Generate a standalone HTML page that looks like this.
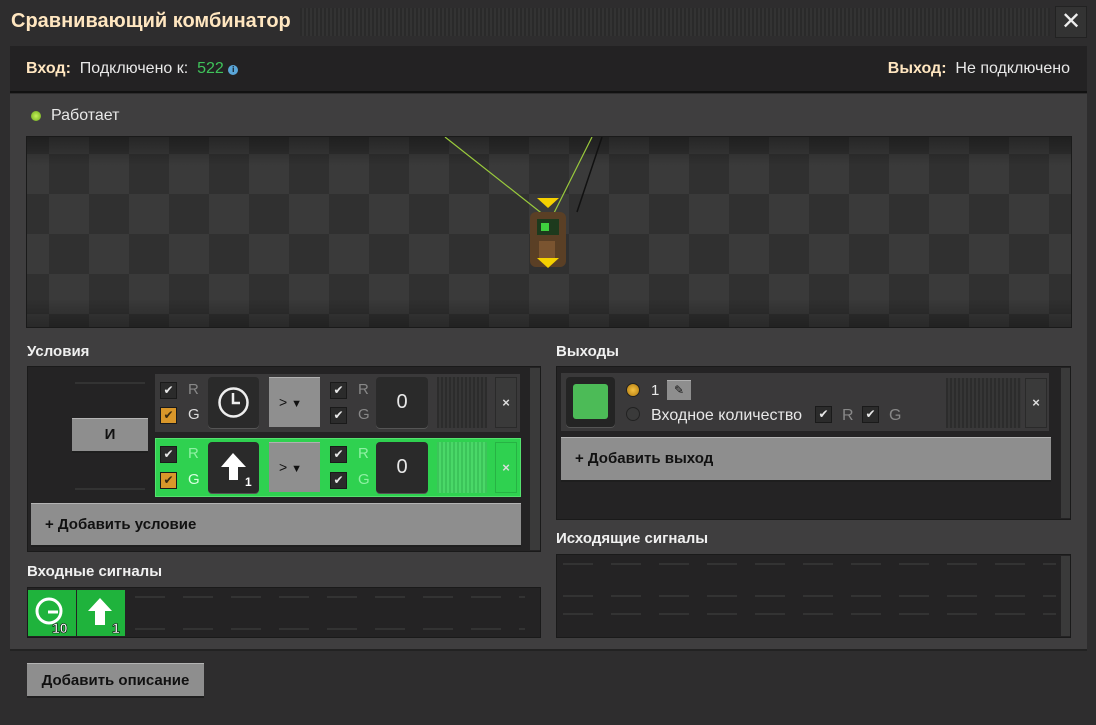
<!DOCTYPE html>
<html><head><meta charset="utf-8"><style>
*{margin:0;padding:0;box-sizing:border-box}
body{width:1096px;height:725px;background:#2e2d2e;font-family:"Liberation Sans","DejaVu Sans",sans-serif;position:relative;overflow:hidden;color:#e8e8e8}
.a{position:absolute}
.t{font-size:15px;white-space:nowrap}
.b{font-weight:bold}
.chk{position:absolute;width:17px;height:17px;background:#2b2b2b;border:1px solid #1a1a1a;color:#e8e8e8;font-size:12px;line-height:15px;text-align:center}
.chk.o{background:#d9972a;color:#3a2a10}
.slot{position:absolute;background:#2a2a2a;border-radius:4px;box-shadow:0 1px 0 #555}
.dd{position:absolute;background:#8f8f8f;border-top:1px solid #b0b0b0;color:#111;font-size:14px}
.stripe{position:absolute;background:repeating-linear-gradient(90deg,#2c2c2c 0 2px,#363636 2px 4px)}
.x{position:absolute;background:#3a3a3a;border:1px solid #2a2a2a;color:#ddd;font-size:13px;text-align:center;font-weight:bold}
.btn{position:absolute;background:#8e8e8e;border-top:1px solid #b4b4b4;border-bottom:2px solid #1e1e1e;color:#111;font-weight:bold;font-size:15px}
.lbl{position:absolute;font-weight:bold;font-size:15px;color:#f0f0f0}
.dash{position:absolute;left:6px;right:14px;height:2px;background:repeating-linear-gradient(90deg,#333 0 30px,transparent 30px 48px)}
</style></head><body>
<!-- title -->
<div class="a b" style="left:11px;top:10px;font-size:20px;color:#ffe6c0">Сравнивающий комбинатор</div>
<div class="a" style="left:300px;top:8px;width:750px;height:28px;background:repeating-linear-gradient(90deg,#2a2a2a 0 2px,#333 2px 4px)"></div>
<div class="a" style="left:1055px;top:6px;width:32px;height:32px;background:#333;border:1px solid #222;color:#eee;font-size:24px;font-weight:bold;text-align:center;line-height:30px">✕</div>
<!-- header -->
<div class="a" style="left:10px;top:46px;width:1077px;height:47px;background:#232223;border-bottom:2px solid #111"></div>
<div class="a t" style="left:26px;top:60px;font-size:16px"><span class="b" style="color:#ffe6c0">Вход:</span>&nbsp; Подключено к:&nbsp; <span style="color:#3fc35a">522</span> <span style="display:inline-block;width:10px;height:10px;border-radius:50%;background:#5aa6d8;color:#111;font-size:8px;line-height:10px;text-align:center;vertical-align:1px;font-weight:bold">i</span></div>
<div class="a t" style="right:26px;top:60px;font-size:16px"><span class="b" style="color:#ffe6c0">Выход:</span>&nbsp; Не подключено</div>
<!-- content -->
<div class="a" style="left:10px;top:94px;width:1077px;height:555px;background:#3f3e3f"></div>
<div class="a" style="left:31px;top:111px;width:10px;height:10px;border-radius:50%;background:radial-gradient(#c6f05a,#6aa81a)"></div>
<div class="a t" style="left:51px;top:107px;font-size:16px">Работает</div>
<!-- preview -->
<div class="a" style="left:26px;top:136px;width:1046px;height:192px;border:1px solid #1a1a1a;overflow:hidden;background-color:#343434;background-image:conic-gradient(#3a3a3a 25%,#303030 0 50%,#3a3a3a 0 75%,#303030 0);background-size:80px 80px;background-position:-18px -23px">
<div class="a" style="left:0;top:0;width:100%;height:100%;background:linear-gradient(180deg,rgba(0,0,0,.35),rgba(0,0,0,0) 15%,rgba(0,0,0,0) 85%,rgba(0,0,0,.3))"></div>
<svg class="a" style="left:0;top:0" width="1046" height="192"><line x1="418" y1="0" x2="522" y2="82" stroke="#9acb3c" stroke-width="1.2"/><line x1="565" y1="0" x2="525" y2="80" stroke="#9acb3c" stroke-width="1.2"/><line x1="575" y1="0" x2="550" y2="75" stroke="#111" stroke-width="1.5"/>
<polygon points="510,61 532,61 521,71" fill="#f5d000"/>
<rect x="503" y="75" width="36" height="55" rx="6" fill="#5a3f25"/><rect x="510" y="82" width="22" height="16" fill="#1d3a1d"/><rect x="514" y="86" width="8" height="8" fill="#3fd03f"/><rect x="512" y="104" width="16" height="18" fill="#7a5430"/>
<polygon points="510,121 532,121 521,131" fill="#f5d000"/></svg>
</div>
<!-- conditions -->
<div class="lbl" style="left:27px;top:343px">Условия</div>
<div class="a" style="left:27px;top:366px;width:514px;height:186px;background:#242324;border:1px solid #1a1a1a"></div>
<div class="a" style="left:530px;top:368px;width:10px;height:182px;background:#3a3a3a"></div>
<div class="a" style="left:75px;top:382px;width:70px;height:2px;background:#333"></div>
<div class="a" style="left:75px;top:488px;width:70px;height:2px;background:#333"></div>
<div class="btn" style="left:72px;top:418px;width:76px;height:35px;text-align:center;line-height:32px">И</div>
<!-- row1 -->
<div class="a" style="left:155px;top:374px;width:365px;height:58px;background:#3a393a"></div>
<div class="chk" style="left:160px;top:382px">✔</div><div class="a t" style="left:188px;top:381px;color:#888">R</div>
<div class="chk o" style="left:160px;top:407px">✔</div><div class="a t" style="left:188px;top:406px;color:#ddd">G</div>
<div class="slot" style="left:208px;top:377px;width:51px;height:51px"><svg width="51" height="51"><circle cx="25.5" cy="25.5" r="14" fill="none" stroke="#eee" stroke-width="2.5"/><path d="M25 16v10h7" fill="none" stroke="#eee" stroke-width="2.5"/></svg></div>
<div class="dd" style="left:269px;top:377px;width:51px;height:50px;line-height:48px;padding-left:10px">&gt; <span style="font-size:11px">▼</span></div>
<div class="chk" style="left:330px;top:382px">✔</div><div class="a t" style="left:358px;top:381px;color:#888">R</div>
<div class="chk" style="left:330px;top:407px">✔</div><div class="a t" style="left:358px;top:406px;color:#888">G</div>
<div class="slot" style="left:376px;top:377px;width:52px;height:51px;text-align:center;line-height:51px;font-size:20px">0</div>
<div class="stripe" style="left:437px;top:377px;width:50px;height:51px"></div>
<div class="x" style="left:495px;top:377px;width:22px;height:51px;line-height:49px">×</div>
<!-- row2 -->
<div class="a" style="left:155px;top:438px;width:366px;height:59px;background:#2fd150;border:1px solid #55e26f"></div>
<div class="chk" style="left:160px;top:446px">✔</div><div class="a t" style="left:188px;top:445px;color:#8ff0a3">R</div>
<div class="chk o" style="left:160px;top:472px">✔</div><div class="a t" style="left:188px;top:471px;color:#d8ffe0">G</div>
<div class="slot" style="left:208px;top:442px;width:51px;height:51px"><svg width="51" height="51"><path d="M25 11L13 25h8v13h9V25h8z" fill="#fff"/><text x="37" y="44" font-size="12" font-weight="bold" fill="#fff" font-family="Liberation Sans">1</text></svg></div>
<div class="dd" style="left:269px;top:442px;width:51px;height:50px;line-height:48px;padding-left:10px">&gt; <span style="font-size:11px">▼</span></div>
<div class="chk" style="left:330px;top:446px">✔</div><div class="a t" style="left:358px;top:445px;color:#8ff0a3">R</div>
<div class="chk" style="left:330px;top:472px">✔</div><div class="a t" style="left:358px;top:471px;color:#8ff0a3">G</div>
<div class="slot" style="left:376px;top:442px;width:52px;height:51px;text-align:center;line-height:51px;font-size:20px">0</div>
<div class="a" style="left:437px;top:442px;width:50px;height:51px;background:repeating-linear-gradient(90deg,#3cc45a 0 2px,#4ad868 2px 4px)"></div>
<div class="x" style="left:495px;top:442px;width:22px;height:51px;line-height:49px;background:#2fd150;border-color:#27b344">×</div>
<div class="btn" style="left:31px;top:503px;width:490px;height:44px;line-height:42px;padding-left:14px">+ Добавить условие</div>
<!-- input signals -->
<div class="lbl" style="left:27px;top:563px">Входные сигналы</div>
<div class="a" style="left:27px;top:587px;width:514px;height:51px;background:#242324;border:1px solid #1a1a1a"></div>
<div class="a" style="left:28px;top:590px;width:48px;height:46px;background:#1fb33c"><svg width="48" height="46"><circle cx="21" cy="21" r="12" fill="none" stroke="#fff" stroke-width="3"/><path d="M20 22h10" stroke="#fff" stroke-width="3"/><text x="24" y="43" font-size="14" font-weight="bold" fill="#fff" stroke="#000" stroke-width=".6" font-family="Liberation Sans">10</text></svg></div>
<div class="a" style="left:77px;top:590px;width:48px;height:46px;background:#1fb33c"><svg width="48" height="46"><path d="M23 8L11 21h7v14h10V21h7z" fill="#fff"/><text x="35" y="43" font-size="14" font-weight="bold" fill="#fff" stroke="#000" stroke-width=".6" font-family="Liberation Sans">1</text></svg></div>
<div class="dash" style="left:135px;right:auto;width:390px;top:596px"></div>
<div class="dash" style="left:135px;right:auto;width:390px;top:628px"></div>
<!-- outputs -->
<div class="lbl" style="left:556px;top:343px">Выходы</div>
<div class="a" style="left:556px;top:366px;width:515px;height:154px;background:#242324;border:1px solid #1a1a1a"></div>
<div class="a" style="left:561px;top:373px;width:488px;height:58px;background:#3a393a"></div>
<div class="slot" style="left:566px;top:377px;width:49px;height:50px;background:#242424"><div class="a" style="left:7px;top:7px;width:35px;height:35px;background:#4cbb57;border-radius:3px"></div></div>
<div class="a" style="left:626px;top:383px;width:14px;height:14px;border-radius:50%;background:radial-gradient(#f5c040,#b07a10);border:1px solid #222"></div>
<div class="a" style="left:626px;top:407px;width:14px;height:14px;border-radius:50%;background:#3a3a3a;border:1px solid #222"></div>
<div class="a t" style="left:651px;top:382px">1</div>
<div class="a" style="left:667px;top:380px;width:24px;height:20px;background:#8e8e8e;border-top:1px solid #b0b0b0;color:#111;font-size:12px;text-align:center;line-height:19px">✎</div>
<div class="a t" style="left:651px;top:407px;font-size:16px">Входное количество</div>
<div class="chk" style="left:815px;top:406px">✔</div><div class="a t" style="left:842px;top:407px;color:#888;font-size:16px">R</div>
<div class="chk" style="left:862px;top:406px">✔</div><div class="a t" style="left:889px;top:407px;color:#888;font-size:16px">G</div>
<div class="stripe" style="left:946px;top:378px;width:75px;height:50px"></div>
<div class="x" style="left:1025px;top:378px;width:22px;height:50px;line-height:48px">×</div>
<div class="btn" style="left:561px;top:437px;width:490px;height:45px;line-height:42px;padding-left:14px">+ Добавить выход</div>
<div class="a" style="left:1061px;top:368px;width:9px;height:150px;background:#3a3a3a"></div>
<!-- outgoing -->
<div class="lbl" style="left:556px;top:530px">Исходящие сигналы</div>
<div class="a" style="left:556px;top:554px;width:515px;height:84px;background:#242324;border:1px solid #1a1a1a">
<div class="dash" style="top:8px"></div><div class="dash" style="top:40px"></div><div class="dash" style="top:58px"></div></div>
<div class="a" style="left:1061px;top:556px;width:9px;height:80px;background:#3a3a3a"></div>
<!-- bottom -->
<div class="a" style="left:10px;top:649px;width:1077px;height:2px;background:#222"></div>
<div class="btn" style="left:27px;top:663px;width:177px;height:35px;line-height:33px;text-align:center">Добавить описание</div>
</body></html>
